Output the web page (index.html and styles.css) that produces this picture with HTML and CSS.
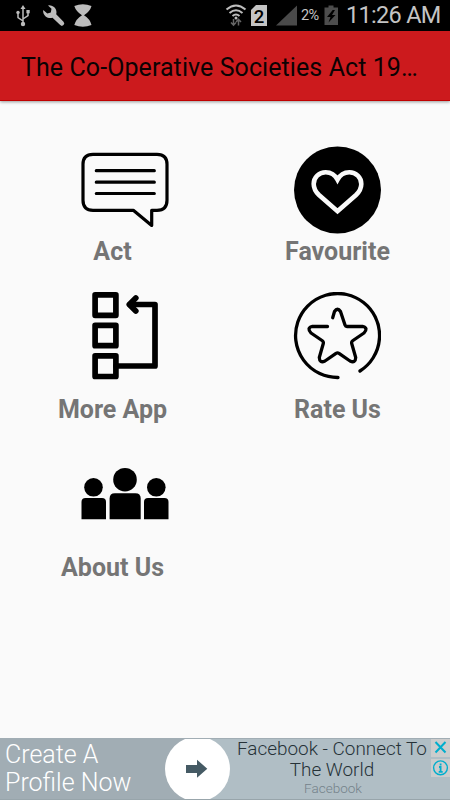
FILE: index.html
```html
<!DOCTYPE html>
<html lang="en">
<head>
    <meta charset="UTF-8">
    <meta name="viewport" content="width=device-width, initial-scale=1.0">
    <title>The Co-Operative Societies Act</title>
    <link rel="stylesheet" href="styles.css">
</head>
<body>
    <div class="status-bar">
        <svg class="notifications" width="84" height="31" viewBox="0 0 84 31">
            <!-- usb -->
            <g stroke="#bdbdbd" stroke-width="1.5" fill="none">
                <path d="M13 8v16M13 21l-5-3.500v-4M13 19l5-3.500v-4"/>
            </g>
            <g fill="#bdbdbd">
                <path d="M13 5l2.500 4h-5z"/>
                <circle cx="13" cy="24" r="2.200"/>
                <circle cx="8" cy="12.500" r="1.700"/>
                <rect x="16.400" y="10" width="3.300" height="3.300"/>
            </g>
            <!-- wrench -->
            <path fill="#bdbdbd" d="M38 5.500a7 7 0 0 1 8.200 8.800L53.500 21.800a2.300 2.300 0 0 1-3.300 3.300L42.500 17.700A7 7 0 0 1 33.200 10L37.300 13.600 40.800 12.500 41.500 8.700z"/>
            <!-- hourglass -->
            <path fill="#bdbdbd" d="M64.300 6Q72.800 2.500 81.500 6 80 11.500 74 15.300 80 19 81.500 25 72.800 28.500 64.300 25 66 19 72 15.300 66 11.500 64.300 6z"/>
        </svg>
        <svg class="signals" width="73" height="31" viewBox="0 0 73 31">
            <!-- wifi -->
            <g stroke="#bdbdbd" stroke-width="2" fill="none">
                <path d="M1.500 9.500Q11 1.500 20.500 9.500M4.500 13Q11 7.500 17.500 13M7.500 16Q11 13 14.500 16"/>
            </g>
            <circle cx="11" cy="18" r="1.500" fill="#bdbdbd"/>
            <path d="M8.500 19v6M6 22.500l2.500 2.700 2.500-2.700M13.500 25.500v-6M11 22l2.500-2.700 2.500 2.700" stroke="#666" stroke-width="1.500" fill="none"/>
            <!-- sim card -->
            <path fill="#c4c4c4" d="M31 5h11v21H26V10z"/>
            <text class="sim" x="34" y="23">2</text>
            <path fill="#4a4a4a" d="M72 5.500v20H51z"/>
        </svg>
        <span class="percent">2%</span>
        <svg class="battery" width="15" height="31" viewBox="0 0 15 31">
            <path fill="#4d4d4d" d="M4.500 5.500h5v2h4.500V25H.500V7.500h4z"/>
            <path fill="#000" d="M8.700 10L3 17h3.500L4.500 22.500 11.500 15H8l3-5z"/>
        </svg>
        <span class="clock">11:26 AM</span>
    </div>

    <header class="app-bar">
        <h1>The Co-Operative Societies Act 19…</h1>
    </header>

    <main class="menu">
        <a class="item item-first">
            <svg class="icon icon-left" viewBox="0 0 88 88">
                <g fill="none" stroke="#000" stroke-width="3.200" stroke-linecap="round">
                    <path stroke-linejoin="round" d="M52.300 64.300H12Q2 64.300 2 54.300V18.300Q2 8.300 12 8.300H76Q86 8.300 86 18.300V54.300Q86 64.300 76 64.300H70.700V79.500z"/>
                    <path d="M15.300 24.700h58M15.300 36.200h58M15.300 47.500h58"/>
                </g>
            </svg>
            <span class="label">Act</span>
        </a>
        <a class="item item-first">
            <svg class="icon icon-right" viewBox="-0.500 0 88 88">
                <circle cx="44" cy="44" r="43.500"/>
                <path fill="none" stroke="#fafafa" stroke-width="4.600" d="M44 33.700C41.500 29 37 26.300 32.200 26.300 25.500 26.300 20.200 31.500 20.200 38 20.200 42.500 22 45.700 25.500 49L44 65.200 62.500 49C66 45.700 67.800 42.500 67.800 38 67.800 31.500 62.500 26.300 55.800 26.300 51 26.300 46.500 29 44 33.700z"/>
            </svg>
            <span class="label">Favourite</span>
        </a>
        <a class="item">
            <svg class="icon icon-left" viewBox="0 0 88 88">
                <g fill="none" stroke="#000" stroke-width="5.700" stroke-linejoin="round" stroke-linecap="round">
                    <rect x="14.100" y="2.900" width="20.800" height="20.400"/>
                    <rect x="14.100" y="33.300" width="20.800" height="20.400"/>
                    <rect x="14.100" y="63.800" width="20.800" height="20.700"/>
                    <path d="M35 74h39V12.500H49"/>
                    <path d="M54.800 6L48.300 12.500 54.800 19"/>
                </g>
            </svg>
            <span class="label">More App</span>
        </a>
        <a class="item">
            <svg class="icon icon-right" viewBox="-0.500 0 88 88">
                <g fill="none" stroke="#000" stroke-width="3.300" stroke-linecap="round" stroke-linejoin="round">
                    <path d="M44.500 85.500A42 42 0 1 1 66.500 79"/>
                    <path d="M39.200 25.700L41 19.500Q44 15 47 19.500L51.500 33Q52 34.500 53.500 34.500H69.500Q75 36 70.500 41L59.500 48.500Q57.700 49.800 58.200 51.500L62.200 65.500Q62 71.500 56.500 69L45.500 61.400Q44 60.500 42.500 61.400L31.500 69Q26 71.500 25.800 65.500L29.800 51.500Q30.300 49.800 28.500 48.500L17.500 41Q13 36 18.500 34.500H34"/>
                </g>
            </svg>
            <span class="label">Rate Us</span>
        </a>
        <a class="item">
            <svg class="icon icon-left" viewBox="0 0 88 88">
                <circle cx="12.500" cy="37.300" r="9.300"/>
                <circle cx="75.300" cy="37.300" r="9.300"/>
                <circle cx="44" cy="29.700" r="11.800"/>
                <path d="M.500 69.300V52q0-4 4-4h16.500q4 0 4 4v17.300z"/>
                <path d="M63 69.300V52q0-4 4-4h16.500q4 0 4 4v17.300z"/>
                <path d="M28.600 69.300V48.500q0-5.300 5.300-5.300h20.500q5.300 0 5.300 5.300v20.800z"/>
            </svg>
            <span class="label">About Us</span>
        </a>
    </main>

    <footer class="ad">
        <div class="ad-action">Create A<br>Profile Now</div>
        <svg class="ad-arrow" width="65" height="60" viewBox="0 0 65 60">
            <path fill="#b0bec5" d="M32 0h33v60H32z"/>
            <circle cx="32.500" cy="30" r="32.500" fill="#fff"/>
            <path fill="#455a64" d="M21 26h11v-5.300l10.300 9L32 38.700V34H21z"/>
        </svg>
        <div class="ad-text">
            <p class="ad-title">Facebook - Connect To<br>The World</p>
            <p class="ad-source">Facebook</p>
        </div>
        <div class="ad-controls">
            <svg width="19" height="18" viewBox="0 0 19 18">
                <path d="M4.500 3l10 10.500M14.500 3l-10 10.500" stroke="#00aecd" stroke-width="2"/>
            </svg>
            <svg width="19" height="18" viewBox="0 0 19 18">
                <circle cx="9.500" cy="8.800" r="6.900" fill="none" stroke="#00aecd" stroke-width="1.400"/>
                <path d="M9.600 4.500v2M8 8h1.600v5M7.700 12.800h4" stroke="#00aecd" stroke-width="1.800" fill="none"/>
            </svg>
        </div>
    </footer>
</body>
</html>
```
FILE: styles.css
```css
* {
    box-sizing: border-box;
}
body {
    margin: 0;
    height: 800px;
    display: flex;
    flex-direction: column;
    background: #fafafa;
    font-family: Roboto, sans-serif;
    overflow: hidden;
}
.status-bar {
    height: 31px;
    display: flex;
    align-items: center;
    background: #000;
    color: #c4c4c4;
    flex-shrink: 0;
}
.notifications {
    margin-left: 10px;
}
.signals {
    margin-left: 131px;
}
.sim {
    font-size: 18.500px;
    font-weight: 500;
    text-anchor: middle;
}
.percent {
    width: 19px;
    margin-left: 3px;
    font-size: 14.500px;
    letter-spacing: -0.700px;
    white-space: nowrap;
}
.battery {
    margin-left: 4px;
}
.clock {
    margin-left: 7px;
    font-size: 23.500px;
    line-height: 31px;
    letter-spacing: -0.700px;
    white-space: nowrap;
}
.app-bar {
    height: 70px;
    padding-left: 21px;
    display: flex;
    align-items: center;
    background: #cc1a1d;
    border-bottom: 1px solid #c00000;
    box-shadow: 0 1px 3px rgba(0, 0, 0, 0.4);
    flex-shrink: 0;
}
h1 {
    margin: 4px 0 0;
    font-size: 25px;
    font-weight: normal;
    letter-spacing: 0.080px;
    color: #0c0203;
    white-space: nowrap;
}
.menu {
    flex: 1;
    display: grid;
    grid-template-columns: 225px 225px;
    grid-template-rows: 133px 158px 158px;
    align-content: start;
    padding-top: 33px;
}
.item {
    display: flex;
    flex-direction: column;
    justify-content: flex-end;
    align-items: center;
    gap: 14px;
}
.item-first {
    gap: 2px;
}
.icon {
    width: 88px;
    height: 88px;
}
.icon-left {
    margin-left: 25px;
}
.icon-right {
    margin-right: 1px;
}
.label {
    font-size: 25px;
    line-height: 31px;
    font-weight: bold;
    color: #757575;
    white-space: nowrap;
}
.ad {
    height: 62px;
    display: flex;
    background: #b0bec5;
    border-top: 1px solid #a1adb4;
    border-bottom: 1px solid #98a5ab;
    flex-shrink: 0;
}
.ad-action {
    width: 165px;
    padding: 2px 0 0 5px;
    background: #a1adb4;
    color: #fff;
    font-size: 25px;
    line-height: 28px;
    font-weight: 300;
    white-space: nowrap;
}
.ad-arrow {
    background: #a1adb4;
}
.ad-text {
    width: 201px;
    padding-left: 3px;
    text-align: center;
    font-weight: 300;
    white-space: nowrap;
}
.ad-title {
    margin: -1px 0 0;
    font-size: 18.900px;
    line-height: 21px;
    color: #263238;
}
.ad-source {
    margin: 0;
    padding-left: 2px;
    font-size: 13.500px;
    line-height: 17px;
    color: #74828a;
}
.ad-controls {
    width: 19px;
    display: flex;
    flex-direction: column;
    gap: 2px;
}
.ad-controls svg {
    background: #ccc;
}
```
